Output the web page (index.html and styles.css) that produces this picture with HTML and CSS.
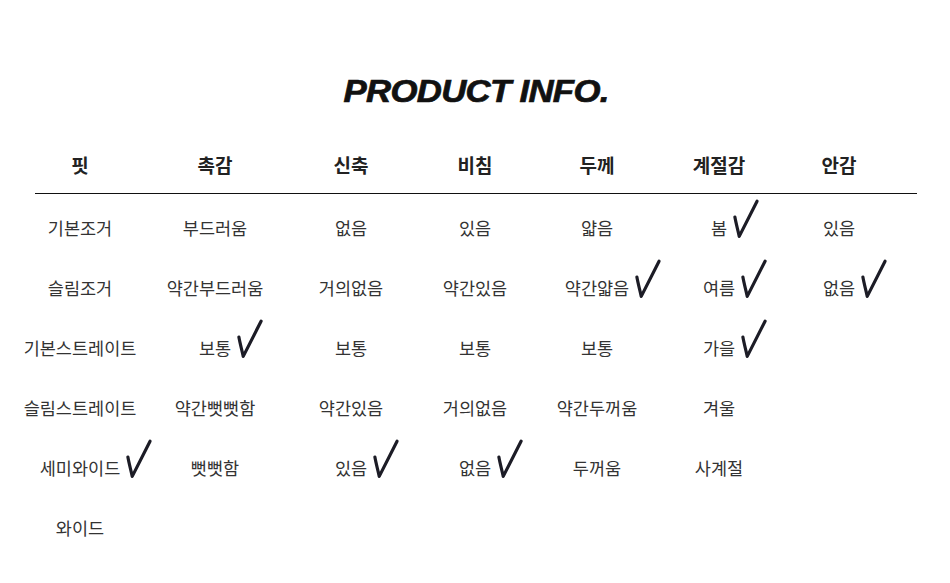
FILE: index.html
```html
<!DOCTYPE html>
<html lang="ko">
<head>
<meta charset="utf-8">
<title>Product Info</title>
<link rel="stylesheet" href="styles.css">
</head>
<body>
<div class="page">
  <h1 class="title">PRODUCT INFO.</h1>
  <div class="table">
    <div class="row head">
      <div class="cell">핏</div>
      <div class="cell">촉감</div>
      <div class="cell">신축</div>
      <div class="cell">비침</div>
      <div class="cell">두께</div>
      <div class="cell">계절감</div>
      <div class="cell">안감</div>
    </div>
    <div class="row">
      <div class="cell"><span class="t">기본조거</span></div>
      <div class="cell"><span class="t">부드러움</span></div>
      <div class="cell"><span class="t">없음</span></div>
      <div class="cell"><span class="t">있음</span></div>
      <div class="cell"><span class="t">얇음</span></div>
      <div class="cell"><span class="t on">봄<svg class="chk" viewBox="0 0 28 42"><path d="M3 19 C4 25 6 32 7.5 39 L26 2.5"/></svg></span></div>
      <div class="cell"><span class="t">있음</span></div>
    </div>
    <div class="row">
      <div class="cell"><span class="t">슬림조거</span></div>
      <div class="cell"><span class="t">약간부드러움</span></div>
      <div class="cell"><span class="t">거의없음</span></div>
      <div class="cell"><span class="t">약간있음</span></div>
      <div class="cell"><span class="t on">약간얇음<svg class="chk" viewBox="0 0 28 42"><path d="M3 19 C4 25 6 32 7.5 39 L26 2.5"/></svg></span></div>
      <div class="cell"><span class="t on">여름<svg class="chk" viewBox="0 0 28 42"><path d="M3 19 C4 25 6 32 7.5 39 L26 2.5"/></svg></span></div>
      <div class="cell"><span class="t on">없음<svg class="chk" viewBox="0 0 28 42"><path d="M3 19 C4 25 6 32 7.5 39 L26 2.5"/></svg></span></div>
    </div>
    <div class="row">
      <div class="cell"><span class="t">기본스트레이트</span></div>
      <div class="cell"><span class="t on">보통<svg class="chk" viewBox="0 0 28 42"><path d="M3 19 C4 25 6 32 7.5 39 L26 2.5"/></svg></span></div>
      <div class="cell"><span class="t">보통</span></div>
      <div class="cell"><span class="t">보통</span></div>
      <div class="cell"><span class="t">보통</span></div>
      <div class="cell"><span class="t on">가을<svg class="chk" viewBox="0 0 28 42"><path d="M3 19 C4 25 6 32 7.5 39 L26 2.5"/></svg></span></div>
      <div class="cell"></div>
    </div>
    <div class="row">
      <div class="cell"><span class="t">슬림스트레이트</span></div>
      <div class="cell"><span class="t">약간뻣뻣함</span></div>
      <div class="cell"><span class="t">약간있음</span></div>
      <div class="cell"><span class="t">거의없음</span></div>
      <div class="cell"><span class="t">약간두꺼움</span></div>
      <div class="cell"><span class="t">겨울</span></div>
      <div class="cell"></div>
    </div>
    <div class="row">
      <div class="cell"><span class="t on">세미와이드<svg class="chk" viewBox="0 0 28 42"><path d="M3 19 C4 25 6 32 7.5 39 L26 2.5"/></svg></span></div>
      <div class="cell"><span class="t">뻣뻣함</span></div>
      <div class="cell"><span class="t on">있음<svg class="chk" viewBox="0 0 28 42"><path d="M3 19 C4 25 6 32 7.5 39 L26 2.5"/></svg></span></div>
      <div class="cell"><span class="t on">없음<svg class="chk" viewBox="0 0 28 42"><path d="M3 19 C4 25 6 32 7.5 39 L26 2.5"/></svg></span></div>
      <div class="cell"><span class="t">두꺼움</span></div>
      <div class="cell"><span class="t">사계절</span></div>
      <div class="cell"></div>
    </div>
    <div class="row">
      <div class="cell"><span class="t">와이드</span></div>
      <div class="cell"></div>
      <div class="cell"></div>
      <div class="cell"></div>
      <div class="cell"></div>
      <div class="cell"></div>
      <div class="cell"></div>
    </div>
  </div>
</div>
</body>
</html>
```
FILE: styles.css
```css
html, body {
  margin: 0;
  padding: 0;
  background: #ffffff;
}
body {
  font-family: "Noto Sans CJK KR", "Noto Sans", sans-serif;
  color: #333333;
}
.page {
  width: 950px;
  padding: 0 33px 0 35px;
  box-sizing: border-box;
}
.title {
  margin: 74px 0 0;
  height: 36px;
  line-height: 36px;
  font-family: "Liberation Sans", Arial, sans-serif;
  font-weight: 700;
  font-style: italic;
  font-size: 31px;
  letter-spacing: -0.6px;
  color: #111111;
  -webkit-text-stroke: 0.7px #111111;
  text-align: center;
  transform: scaleX(1.12);
  transform-origin: 440px 50%;
}
.table {
  margin-top: 27px;
  width: 882px;
}
.row {
  display: grid;
  grid-template-columns: 90px 180px 92px 156px 88px 156px 84px 36px;
  height: 60px;
  align-items: center;
}
.row.head {
  height: 57px;
  border-bottom: 1px solid #111111;
  margin-bottom: 5px;
  font-size: 19px;
  line-height: 26px;
  font-weight: 700;
  color: #222222;
  align-items: start;
  padding-top: 15px;
  box-sizing: border-box;
}
.cell {
  display: flex;
  justify-content: center;
  align-items: center;
  white-space: nowrap;
}
.t {
  position: relative;
  top: -1px;
  font-size: 17.5px;
  line-height: 24px;
  color: #333333;
}
.chk {
  position: absolute;
  left: calc(100% + 5px);
  top: -18px;
  width: 27px;
  height: 42px;
  overflow: visible;
}
.chk path {
  fill: none;
  stroke: #1c1c26;
  stroke-width: 3.3;
  stroke-linecap: round;
  stroke-linejoin: round;
}
```
